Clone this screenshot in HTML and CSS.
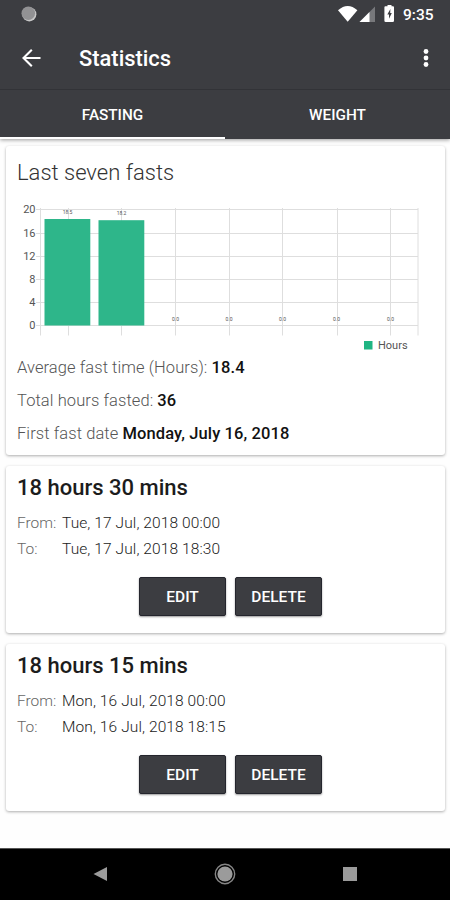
FILE: index.html
```html
<!DOCTYPE html>
<html lang="en">
  <head>
    <meta charset="utf-8" />
    <title>Statistics</title>
    <meta name="viewport" content="width=device-width, initial-scale=1" />
    <link rel="stylesheet" href="styles.css">
  </head>
  <body>
    <header class="header">
      <div class="status-bar">
        <svg class="status-dot" width="18" height="18" viewBox="0 0 18 18">
          <circle cx="9.3" cy="9.3" r="7.1" fill="#c8c8c8" />
          <circle cx="8.3" cy="8.3" r="6.8" fill="#929294" />
        </svg>
        <svg class="status-icons" width="60" height="20" viewBox="0 0 60 20">
          <path d="M0 6.200Q9.700 -2.400 19.400 6.200L9.700 17.800Z" fill="#fff" />
          <path d="M37 2.500V18H21.500Z" fill="#77787b" />
          <path d="M31.500 8V18H21.500Z" fill="#fff" />
          <path d="M47 2.300h2.500V1h4v1.300h1.500q1 0 1 1v13.400q0 1.300-1.300 1.300h-7q-1.300 0-1.300-1.300V3.300q0-1 1-1Z" fill="#fff" />
          <path d="M52.400 5L49.300 10.500h1.700v4.300L53.800 9h-1.600Z" fill="#3c3d41" />
        </svg>
        <span class="clock">9:35</span>
      </div>
      <div class="app-bar">
        <svg class="back" width="20" height="20" viewBox="0 0 20 20">
          <path d="M18.500 10H1.500M9.800 1.800L1.500 10l8.300 8.200" fill="none" stroke="#fff" stroke-width="2.100" />
        </svg>
        <h1>Statistics</h1>
        <svg class="more" width="8" height="22" viewBox="0 0 8 22">
          <g fill="#fff">
            <circle cx="4" cy="4.500" r="2.400" />
            <circle cx="4" cy="11" r="2.400" />
            <circle cx="4" cy="17.500" r="2.400" />
          </g>
        </svg>
      </div>
      <nav class="tabs">
        <a class="tab active">FASTING</a>
        <a class="tab">WEIGHT</a>
      </nav>
    </header>

    <main>
      <section class="card summary">
        <h2>Last seven fasts</h2>
        <svg class="chart" width="438" height="156" viewBox="6 199 438 156">
          <g class="grid">
            <path d="M36 209.500H418M36 233.500H418M36 256.500H418M36 279.500H418M36 302.500H418M36 325.500H418" />
            <path d="M40.500 208V335.500M68.500 208V335.500M121.500 208V335.500M175.500 208V335.500M229.500 208V335.500M282.500 208V335.500M337.500 208V335.500M390.500 208V335.500M418 208V335.500" />
          </g>
          <g fill="#2eb68a">
            <rect x="44.500" y="219" width="45.800" height="106.500" />
            <rect x="98.500" y="220.200" width="45.800" height="105.300" />
          </g>
          <g class="axis">
            <text x="35.500" y="213.400">20</text>
            <text x="35.500" y="236.900">16</text>
            <text x="35.500" y="259.900">12</text>
            <text x="35.500" y="282.900">8</text>
            <text x="35.500" y="305.900">4</text>
            <text x="35.500" y="329">0</text>
          </g>
          <g class="values">
            <text x="67.500" y="214">18.5</text>
            <text x="121.500" y="215.300">18.2</text>
            <text x="175.500" y="321">0.0</text>
            <text x="229" y="321">0.0</text>
            <text x="282.500" y="321">0.0</text>
            <text x="336.500" y="321">0.0</text>
            <text x="390.500" y="321">0.0</text>
          </g>
          <rect x="364" y="341" width="8.500" height="8.500" fill="#1fb583" />
          <text class="legend" x="378" y="349">Hours</text>
        </svg>
        <p>Average fast time (Hours): <b>18.4</b></p>
        <p>Total hours fasted: <b>36</b></p>
        <p>First fast date <b>Monday, July 16, 2018</b></p>
      </section>

      <section class="card fast">
        <h3>18 hours 30 mins</h3>
        <div class="row"><label>From:</label><span>Tue, 17 Jul, 2018 00:00</span></div>
        <div class="row"><label>To:</label><span>Tue, 17 Jul, 2018 18:30</span></div>
        <div class="buttons">
          <button>EDIT</button>
          <button>DELETE</button>
        </div>
      </section>

      <section class="card fast">
        <h3>18 hours 15 mins</h3>
        <div class="row"><label>From:</label><span>Mon, 16 Jul, 2018 00:00</span></div>
        <div class="row"><label>To:</label><span>Mon, 16 Jul, 2018 18:15</span></div>
        <div class="buttons">
          <button>EDIT</button>
          <button>DELETE</button>
        </div>
      </section>
    </main>

    <footer class="nav-bar">
      <svg width="22" height="22" viewBox="0 0 22 22">
        <path d="M4.500 11L18 4V18Z" fill="#9b9b9b" />
      </svg>
      <svg width="22" height="22" viewBox="0 0 22 22">
        <circle cx="11" cy="11" r="9.700" fill="none" stroke="#858585" stroke-width="1.400" />
        <circle cx="11" cy="11" r="7.600" fill="#9b9b9b" />
      </svg>
      <svg width="22" height="22" viewBox="0 0 22 22">
        <rect x="4" y="4" width="14" height="14" fill="#9b9b9b" />
      </svg>
    </footer>
  </body>
</html>
```
FILE: styles.css
```css
* {
  box-sizing: border-box;
}

body {
  margin: 0;
  height: 900px;
  display: flex;
  flex-direction: column;
  overflow: hidden;
  background-color: #fefefe;
  font-family: Roboto, sans-serif;
  color: #1c1c1c;
}

h1,
h2,
h3,
p {
  margin: 0;
}

.header {
  height: 139px;
  margin-bottom: 1px;
  background-color: #3c3d41;
  color: white;
  box-shadow: 0 1px 4px rgba(0, 0, 0, 0.4);
}

.status-bar {
  height: 28px;
  display: flex;
  align-items: center;
  padding: 0 16px 0 20px;
}

.status-icons {
  margin-left: auto;
}

.clock {
  width: 31px;
  margin-left: 5px;
  padding-top: 1px;
  font-size: 15.5px;
  font-weight: 500;
}

.app-bar {
  height: 61px;
  display: flex;
  align-items: center;
  padding: 0 20px 2px 22px;
}

.app-bar h1 {
  margin-left: 37px;
  padding-top: 1px;
  font-size: 21.9px;
  font-weight: 500;
}

.more {
  margin-left: auto;
}

.tabs {
  height: 50px;
  display: flex;
  border-top: 1px solid #323337;
}

.tab {
  flex: 1;
  text-align: center;
  font-size: 15.3px;
  font-weight: 500;
  line-height: 51px;
  border-bottom: 2px solid transparent;
}

.tab.active {
  border-bottom-color: white;
}

main {
  flex: 1;
  padding: 6px 5px 0 6px;
}

.card {
  background-color: white;
  border-radius: 3px;
  box-shadow: 0 1px 3px rgba(0, 0, 0, 0.32);
}

.summary {
  height: 309px;
  margin-bottom: 11px;
}

.summary h2 {
  height: 53px;
  padding-left: 11px;
  font-size: 22px;
  font-weight: 300;
  line-height: 54px;
  color: #333;
}

.chart {
  display: block;
}

.grid path {
  fill: none;
  stroke: #dedede;
}

.axis text {
  font-size: 11px;
  text-anchor: end;
  fill: #555;
}

.values text {
  font-size: 5px;
  text-anchor: middle;
  fill: #555;
}

.legend {
  font-size: 11px;
  fill: #555;
}

.summary p {
  height: 33px;
  padding-left: 11px;
  font-size: 16.5px;
  font-weight: 300;
  line-height: 26px;
  letter-spacing: 0.08px;
  color: #555;
}

.summary b {
  font-weight: 500;
  letter-spacing: 0.12px;
  color: #111;
}

.fast {
  height: 167px;
  margin-bottom: 11px;
  padding: 8px 11px 0;
}

.fast h3 {
  height: 36px;
  font-size: 22px;
  font-weight: 500;
  line-height: 28px;
}

.row {
  display: flex;
  height: 26px;
  font-size: 15.5px;
  line-height: 27px;
  font-weight: 300;
}

.row label {
  width: 45px;
  color: #666;
}

.row span {
  letter-spacing: 0.1px;
  color: #222;
}

.buttons {
  display: flex;
  gap: 9px;
  padding: 15px 0 0 122px;
}

.buttons button {
  width: 87px;
  height: 39px;
  padding: 0;
  border: 1px solid #24252d;
  border-radius: 2px;
  background-color: #3c3d41;
  box-shadow: 0 1px 2px rgba(0, 0, 0, 0.4);
  color: white;
  font: 500 15.5px Roboto, sans-serif;
}

.nav-bar {
  height: 52px;
  display: flex;
  align-items: center;
  justify-content: center;
  gap: 103px;
  padding-bottom: 2px;
  border-top: 1px solid #555;
  background-color: black;
}
```
